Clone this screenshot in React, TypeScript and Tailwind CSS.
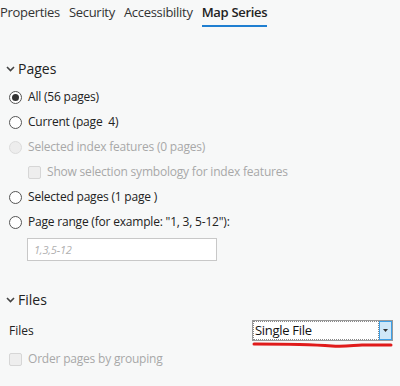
import React, { useState } from "react";

const Radio = ({ checked, disabled }: { checked?: boolean; disabled?: boolean }) => (
  <span
    className={`flex h-[13px] w-[13px] shrink-0 items-center justify-center rounded-full border ${
      disabled ? "border-[#dcdcdc] bg-[#ededed]" : "border-[#555] bg-white"
    }`}
  >
    {checked && <span className="h-[7px] w-[7px] rounded-full bg-[#333]" />}
  </span>
);

const Check = () => (
  <span className="h-[13px] w-[13px] shrink-0 rounded-[2px] border border-[#d6d6d6] bg-[#eeeeee]" />
);

const Chevron = () => (
  <svg width="9" height="6" viewBox="0 0 9 6" className="mt-[1px]">
    <path d="M1 1 L4.5 4.5 L8 1" fill="none" stroke="#444" strokeWidth="1.6" />
  </svg>
);

export default function App() {
  const [range, setRange] = useState("");

  return (
    <div
      className="h-[386px] w-[400px] overflow-hidden bg-[#f7f8f8] text-[12px] text-[#222]"
      style={{ fontFamily: '"Open Sans", "Noto Sans", sans-serif' }}
    >
      {/* tabs */}
      <div className="flex h-[27px] items-start gap-[9px] pt-[3px] text-[13px] tracking-[-0.3px] text-[#333]">
        <span>Properties</span>
        <span>Security</span>
        <span>Accessibility</span>
        <span className="border-b-2 border-[#1f7fd1] pb-[2px] font-semibold text-[#222]">Map Series</span>
      </div>

      {/* Pages */}
      <div className="mt-[31px] flex items-center gap-[3px] pl-[6px] text-[14px]">
        <Chevron />
        <span>Pages</span>
      </div>

      <div className="mt-[9px] flex flex-col gap-[7px] pl-[9px] tracking-[-0.2px]">
        <label className="flex h-[18px] items-center gap-[6px]">
          <Radio checked />
          <span>All (56 pages)</span>
        </label>
        <label className="flex h-[18px] items-center gap-[6px]">
          <Radio />
          <span>Current (page&nbsp; 4)</span>
        </label>
        <label className="flex h-[18px] items-center gap-[6px] text-[#a8a8a8]">
          <Radio disabled />
          <span>Selected index features (0 pages)</span>
        </label>
        <label className="flex h-[18px] items-center gap-[6px] pl-[19px] text-[#a8a8a8]">
          <Check />
          <span>Show selection symbology for index features</span>
        </label>
        <label className="flex h-[18px] items-center gap-[6px]">
          <Radio />
          <span>Selected pages (1 page )</span>
        </label>
        <label className="flex h-[18px] items-center gap-[6px]">
          <Radio />
          <span>Page range (for example: "1, 3, 5-12"):</span>
        </label>
        <input
          value={range}
          onChange={(e) => setRange(e.target.value)}
          placeholder="1,3,5-12"
          className="ml-[18px] h-[23px] w-[190px] border border-[#c8c8c8] bg-white px-[6px] text-[11px] italic outline-none placeholder:text-[#b0b0b0]"
        />
      </div>

      {/* Files */}
      <div className="mt-[28px] flex items-center gap-[3px] pl-[6px] text-[14px]">
        <Chevron />
        <span>Files</span>
      </div>

      <div className="mt-[10px] flex items-center justify-between pl-[9px] pr-[7px]">
        <span>Files</span>
        <div className="relative">
          <div className="flex h-[21px] w-[141px] items-stretch border border-[#9a9a9a] bg-white">
            <div className="flex flex-1 items-center border border-dotted border-[#888] pl-[1px] text-[13px] tracking-[-0.3px] text-[#111]">
              Single File
            </div>
            <div className="flex w-[13px] items-center justify-center border border-[#3ea0e6] bg-[#cfe8f8]">
              <svg width="5" height="3" viewBox="0 0 5 3">
                <path d="M0 0 H5 L2.5 3 Z" fill="#333" />
              </svg>
            </div>
          </div>
          <svg width="141" height="8" viewBox="0 0 141 8" className="absolute left-0 top-[21px]">
            <path
              d="M2 3 C40 3 60 3.5 80 5 C92 6 100 4.5 110 4 L139 4"
              fill="none"
              stroke="#e01b1b"
              strokeWidth="3"
              strokeLinecap="round"
            />
          </svg>
        </div>
      </div>

      <label className="mt-[9px] flex h-[18px] items-center gap-[6px] pl-[9px] tracking-[-0.2px] text-[#a8a8a8]">
        <Check />
        <span>Order pages by grouping</span>
      </label>
    </div>
  );
}
